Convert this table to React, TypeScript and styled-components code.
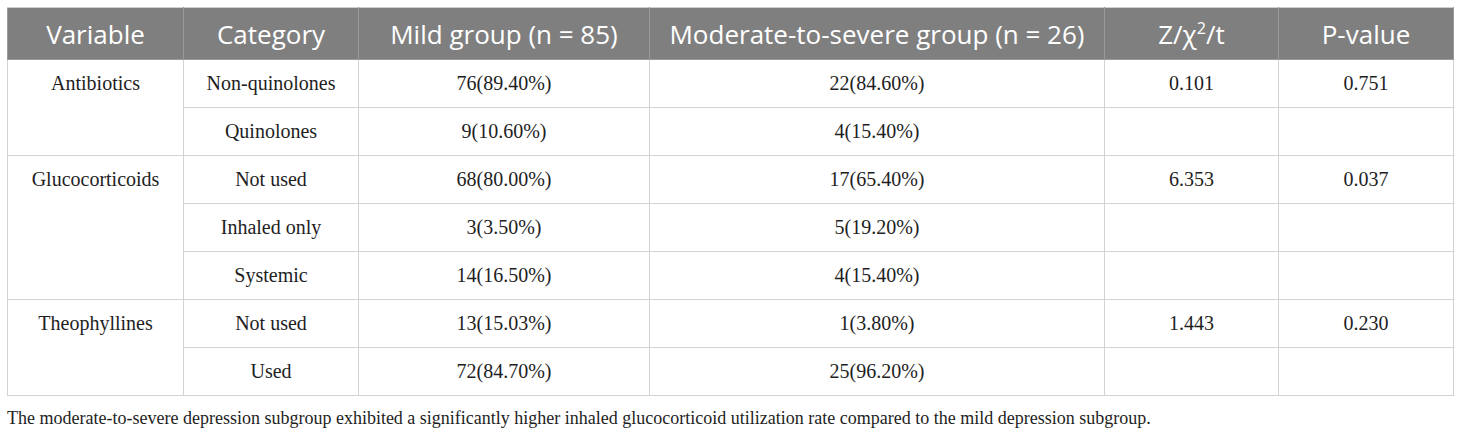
import React from "react";
import styled, { createGlobalStyle } from "styled-components";

const Global = createGlobalStyle`
  html, body { margin: 0; padding: 0; background: #ffffff; }
  body { width: 1460px; height: 434px; overflow: hidden; }
`;

const Page = styled.div`
  padding: 7px 7px 0 7px;
`;

const Table = styled.table`
  border-collapse: collapse;
  table-layout: fixed;
  width: 1446px;
  border: 1px solid #cfcfcf;
`;

const HeadCell = styled.th<{ $w: number }>`
  width: ${(p) => p.$w}px;
  height: 51px;
  padding: 0;
  background: #7f7f7f;
  color: #ffffff;
  font-family: "Open Sans", "Noto Sans", sans-serif;
  font-weight: 400;
  font-size: 26px;
  text-align: center;
  vertical-align: middle;
  border: 1px solid #9a9a9a;
  border-top-color: #cfcfcf;
  white-space: nowrap;
`;

const Cell = styled.td<{ $top?: boolean }>`
  height: 47px;
  padding: 0;
  font-family: "Liberation Serif", "Times New Roman", serif;
  font-size: 20px;
  color: #1e1e1e;
  text-align: center;
  vertical-align: ${(p) => (p.$top ? "top" : "middle")};
  border: 1px solid #d2d2d2;
  white-space: nowrap;
`;

const TopLabel = styled.div`
  height: 47px;
  display: flex;
  align-items: center;
  justify-content: center;
`;

const Caption = styled.p`
  margin: 11px 0 0 0;
  font-family: "Liberation Serif", "Times New Roman", serif;
  font-size: 18px;
  line-height: 22px;
  color: #1e1e1e;
  white-space: nowrap;
`;

type Row = { cat: string; mild: string; mod: string; stat?: string; p?: string };
type Group = { name: string; rows: Row[] };

const groups: Group[] = [
  {
    name: "Antibiotics",
    rows: [
      { cat: "Non-quinolones", mild: "76(89.40%)", mod: "22(84.60%)", stat: "0.101", p: "0.751" },
      { cat: "Quinolones", mild: "9(10.60%)", mod: "4(15.40%)" },
    ],
  },
  {
    name: "Glucocorticoids",
    rows: [
      { cat: "Not used", mild: "68(80.00%)", mod: "17(65.40%)", stat: "6.353", p: "0.037" },
      { cat: "Inhaled only", mild: "3(3.50%)", mod: "5(19.20%)" },
      { cat: "Systemic", mild: "14(16.50%)", mod: "4(15.40%)" },
    ],
  },
  {
    name: "Theophyllines",
    rows: [
      { cat: "Not used", mild: "13(15.03%)", mod: "1(3.80%)", stat: "1.443", p: "0.230" },
      { cat: "Used", mild: "72(84.70%)", mod: "25(96.20%)" },
    ],
  },
];

const Sup = styled.sup`
  font-size: 0.62em;
  line-height: 0;
`;

export default function App() {
  return (
    <Page>
      <Global />
      <Table>
        <thead>
          <tr>
            <HeadCell $w={175}>Variable</HeadCell>
            <HeadCell $w={174}>Category</HeadCell>
            <HeadCell $w={290}>Mild group (n = 85)</HeadCell>
            <HeadCell $w={454}>Moderate-to-severe group (n = 26)</HeadCell>
            <HeadCell $w={173}>
              Z/χ<Sup>2</Sup>/t
            </HeadCell>
            <HeadCell $w={174}>P-value</HeadCell>
          </tr>
        </thead>
        <tbody>
          {groups.map((g) =>
            g.rows.map((r, i) => (
              <tr key={g.name + i}>
                {i === 0 && (
                  <Cell $top rowSpan={g.rows.length}>
                    <TopLabel>{g.name}</TopLabel>
                  </Cell>
                )}
                <Cell>{r.cat}</Cell>
                <Cell>{r.mild}</Cell>
                <Cell>{r.mod}</Cell>
                <Cell>{r.stat ?? ""}</Cell>
                <Cell>{r.p ?? ""}</Cell>
              </tr>
            ))
          )}
        </tbody>
      </Table>
      <Caption>
        The moderate-to-severe depression subgroup exhibited a significantly higher inhaled glucocorticoid utilization
        rate compared to the mild depression subgroup.
      </Caption>
    </Page>
  );
}
